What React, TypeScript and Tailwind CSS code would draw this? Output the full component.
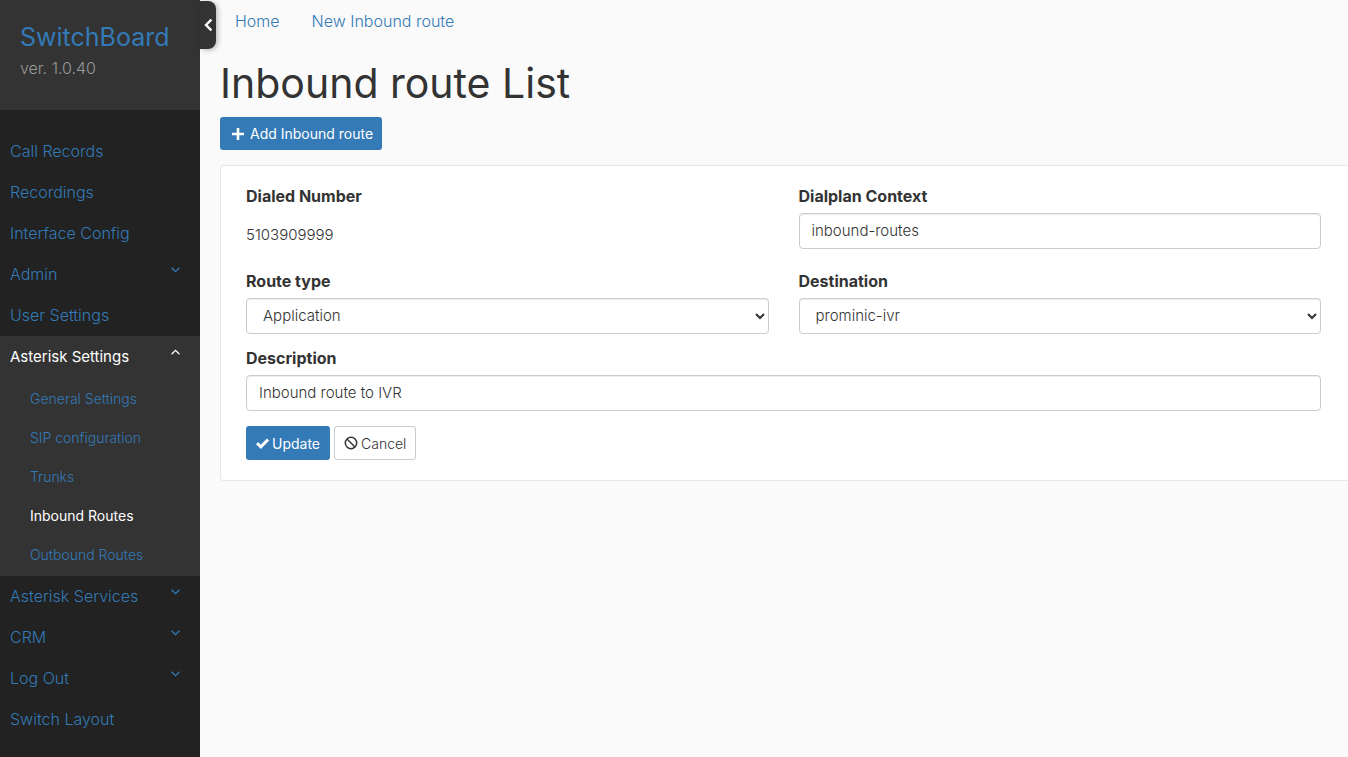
import { useState } from "react";

const menu = [
  { label: "Call Records" },
  { label: "Recordings" },
  { label: "Interface Config" },
  { label: "Admin", group: true },
  { label: "User Settings" },
  {
    label: "Asterisk Settings",
    group: true,
    children: ["General Settings", "SIP configuration", "Trunks", "Inbound Routes", "Outbound Routes"],
  },
  { label: "Asterisk Services", group: true },
  { label: "CRM", group: true },
  { label: "Log Out", group: true },
  { label: "Switch Layout" },
];

function Caret({ open }: { open?: boolean }) {
  return (
    <svg className="mt-[13px] mr-5 h-[6px] w-[9px] shrink-0" viewBox="0 0 9 6" fill="none" stroke="currentColor" strokeWidth="1.3" aria-hidden="true">
      <path d={open ? "M0.6 5.2 4.5 1.3 8.4 5.2" : "M0.6 0.8 4.5 4.7 8.4 0.8"} />
    </svg>
  );
}

function Sidebar() {
  return (
    <aside className="w-[200px] shrink-0 bg-[#222] text-[#337ab7]">
      <div className="h-[110px] bg-[#333] px-5 pt-[22px]">
        <a href="#" className="block text-[25px] leading-[30px] font-normal">SwitchBoard</a>
        <p className="mt-1 text-[16px] leading-6 font-light text-[#999]">ver. 1.0.40</p>
      </div>
      <nav className="pt-[21px] pb-5">
        <ul>
          {menu.map((item) => (
            <li key={item.label} className={item.children ? "bg-[#333]" : ""}>
              <a
                href="#"
                className={
                  item.children
                    ? "flex h-[41px] justify-between pl-[10px] text-[15px] leading-[41px] text-white"
                    : "flex h-[41px] justify-between pl-[10px] text-[16px] leading-[41px] font-light"
                }
              >
                <span>{item.label}</span>
                {item.group && <Caret open={!!item.children} />}
              </a>
              {item.children && (
                <ul className="py-0.5">
                  {item.children.map((c) => (
                    <li key={c}>
                      <a
                        href="#"
                        className={
                          c === "Inbound Routes"
                            ? "block pl-[30px] text-[14px] leading-[39px] text-white"
                            : "block pl-[30px] text-[14px] leading-[39px] font-[350]"
                        }
                      >
                        {c}
                      </a>
                    </li>
                  ))}
                </ul>
              )}
            </li>
          ))}
        </ul>
      </nav>
    </aside>
  );
}

const control =
  "block h-9 w-full rounded-[4px] border border-[#ccc] bg-white pb-0.5 text-[15px] font-light text-[#333] shadow-[inset_0_1px_1px_rgba(0,0,0,0.075)] outline-none";
const labelClass = "block text-[16px] leading-[21px] font-bold";

export default function App() {
  const [context, setContext] = useState("inbound-routes");
  const [description, setDescription] = useState("Inbound route to IVR");
  return (
    <div className="flex min-h-screen bg-[#fafafa] font-['Inter',sans-serif] text-[#333]">
      <Sidebar />
      <main className="relative min-w-0 flex-1 pl-5">
        <button
          type="button"
          aria-label="Collapse menu"
          className="absolute top-px left-0 flex h-12 w-4 items-center justify-center rounded-r-[8px] bg-[#333] text-white shadow-[2px_1px_5px_rgba(0,0,0,0.25)]"
        >
          <svg className="h-[14px] w-[9px]" viewBox="0 0 9 14" fill="none" stroke="currentColor" strokeWidth="2.4" aria-hidden="true">
            <path d="M7.4 1.6 2 7 7.4 12.4" />
          </svg>
        </button>
        <nav className="flex gap-8 pt-[11px] pl-[15px] text-[16px] leading-[21px] font-light text-[#337ab7]">
          <a href="#">Home</a>
          <a href="#">New Inbound route</a>
        </nav>
        <h1 className="mt-7 text-[41px] leading-[46px] font-normal">Inbound route List</h1>
        <button type="button" className="mt-[11px] flex h-[33px] items-center rounded-[3px] bg-[#337ab7] pr-[9px] pl-3 text-[14px] text-white">
          <svg className="mr-[6px] h-3 w-3" viewBox="0 0 12 12" fill="none" stroke="currentColor" strokeWidth="2.6" aria-hidden="true">
            <path d="M6 0V12M0 6H12" />
          </svg>
          Add Inbound route
        </button>
        <form className="mt-[15px] rounded-l-[4px] border border-r-0 border-[#e7e7e7] bg-white pt-5 pr-[27px] pb-5 pl-[25px]" onSubmit={(e) => e.preventDefault()}>
          <div className="grid grid-cols-2 gap-x-[30px]">
            <div>
              <p className={labelClass}>Dialed Number</p>
              <p className="mt-[17px] text-[15px] leading-[21px] font-light">5103909999</p>
            </div>
            <div>
              <label htmlFor="context" className={labelClass}>Dialplan Context</label>
              <input id="context" value={context} onChange={(e) => setContext(e.target.value)} className={`${control} mt-[6px] px-3`} />
            </div>
            <div className="mt-[22px]">
              <label htmlFor="type" className={labelClass}>Route type</label>
              <select id="type" className={`${control} mt-[6px] pl-3`}>
                <option>Application</option>
              </select>
            </div>
            <div className="mt-[22px]">
              <label htmlFor="destination" className={labelClass}>Destination</label>
              <select id="destination" className={`${control} mt-[6px] pl-3`}>
                <option>prominic-ivr</option>
              </select>
            </div>
          </div>
          <div className="mt-[14px]">
            <label htmlFor="description" className={labelClass}>Description</label>
            <input id="description" value={description} onChange={(e) => setDescription(e.target.value)} className={`${control} mt-[6px] px-3`} />
          </div>
          <div className="mt-[15px] flex gap-1">
            <button type="submit" className="flex h-[34px] items-center rounded-[3px] bg-[#337ab7] px-[10px] text-[14px] text-white">
              <svg className="mr-[3px] h-[11px] w-[13px]" viewBox="0 0 13 11" fill="none" stroke="currentColor" strokeWidth="3" aria-hidden="true">
                <path d="M1 5.2 4.8 8.8 12 1.6" />
              </svg>
              Update
            </button>
            <button type="button" className="flex h-[34px] items-center rounded-[3px] border border-[#ccc] bg-white px-[9px] text-[14px] font-light">
              <svg className="mr-[3px] h-[14px] w-[14px]" viewBox="0 0 14 14" fill="none" stroke="currentColor" strokeWidth="1.5" aria-hidden="true">
                <circle cx="7" cy="7" r="5.7" />
                <path d="M3 3 11 11" />
              </svg>
              Cancel
            </button>
          </div>
        </form>
      </main>
    </div>
  );
}
